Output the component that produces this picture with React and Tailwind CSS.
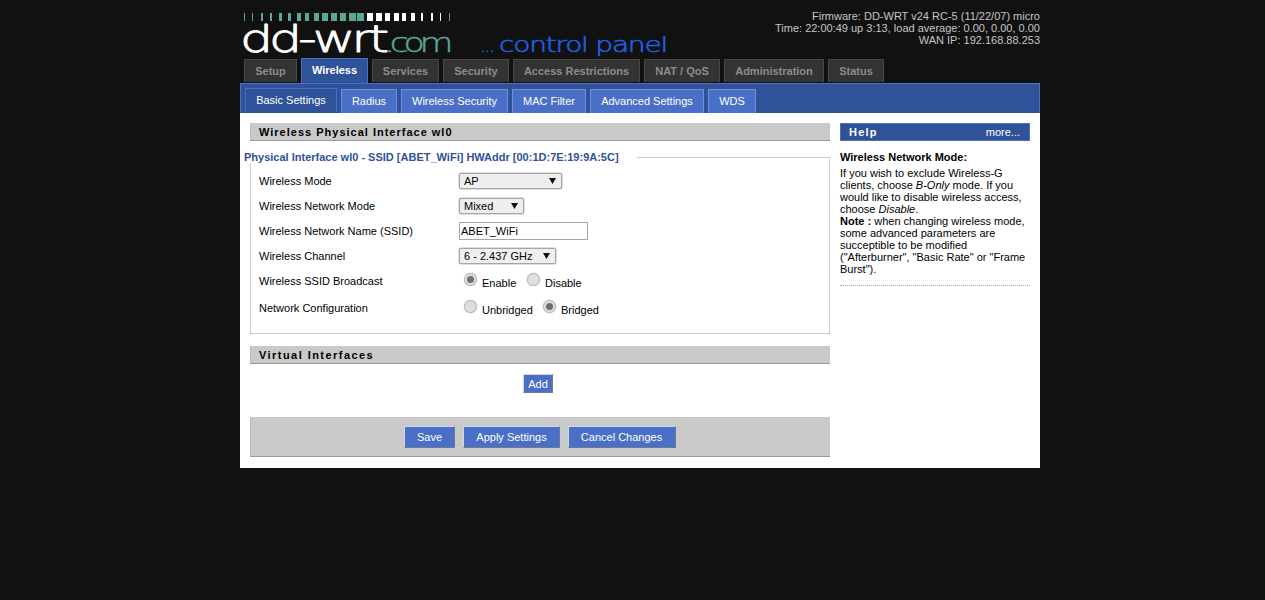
const mainTabs = [
  { name: "Setup", width: "w-[53px]" },
  { name: "Wireless", width: "w-[67px]", active: true },
  { name: "Services", width: "w-[67px]" },
  { name: "Security", width: "w-[66px]" },
  { name: "Access Restrictions", width: "w-[127px]" },
  { name: "NAT / QoS", width: "w-[76px]" },
  { name: "Administration", width: "w-[100px]" },
  { name: "Status", width: "w-[56px]" },
];

const subTabs = [
  { name: "Basic Settings", width: "w-[92px]", active: true },
  { name: "Radius", width: "w-[56px]" },
  { name: "Wireless Security", width: "w-[107px]" },
  { name: "MAC Filter", width: "w-[74px]" },
  { name: "Advanced Settings", width: "w-[114px]" },
  { name: "WDS", width: "w-[48px]" },
];

const stripes = [
  [244, 1, "#5aa897"], [252, 1, "#5aa897"], [261, 2, "#5aa897"], [270, 2, "#5aa897"],
  [279, 3, "#5aa897"], [288, 3, "#5aa897"], [297, 4, "#5aa897"], [305, 4, "#5aa897"],
  [314, 5, "#5aa897"], [322, 6, "#5aa897"], [331, 6, "#5aa897"], [340, 6, "#5aa897"],
  [349, 7, "#5aa897"], [357, 7, "#5aa897"], [367, 6, "#ffffff"], [376, 6, "#ffffff"],
  [385, 5, "#ffffff"], [394, 5, "#ffffff"], [402, 4, "#ffffff"], [411, 4, "#ffffff"],
  [421, 2, "#ffffff"], [431, 2, "#ffffff"], [440, 1, "#ffffff"], [449, 1, "#888888"],
];

const Logo = () => (
  <svg width="440" height="58" viewBox="240 0 440 58" className="block">
    {stripes.map(([x, w, fill]) => (
      <rect key={x} x={x} y="13" width={w} height="8" fill={fill} />
    ))}
    <g fontFamily="'DejaVu Sans', sans-serif" fontWeight="200" strokeLinejoin="round">
      <text x="240" y="52" fontSize="38" letterSpacing="-3" fill="#fff" stroke="#fff" strokeWidth="0.9" textLength="145" lengthAdjust="spacingAndGlyphs">dd-wrt</text>
      <text x="384" y="52" fontSize="26" letterSpacing="-4" fill="#5aa897" stroke="#5aa897" strokeWidth="0.4" textLength="64" lengthAdjust="spacingAndGlyphs">.com</text>
      <text x="480" y="52" fontSize="22" letterSpacing="-2" fill="#1f63e8" stroke="#1f63e8" strokeWidth="0.4" textLength="13" lengthAdjust="spacingAndGlyphs">...</text>
      <text x="499" y="52" fontSize="22" letterSpacing="-1" fill="#1f63e8" stroke="#1f63e8" strokeWidth="0.5" textLength="168" lengthAdjust="spacingAndGlyphs">control panel</text>
    </g>
  </svg>
);

const SectionBar = ({ children, tracking }) => (
  <h2 className={`h-[18px] border-l border-b border-l-[#bbbbbb] border-b-[#999999] bg-[#c9c9c9] pl-[8px] text-[11px] leading-[19px] font-bold text-[#000] ${tracking}`}>
    {children}
  </h2>
);

const Select = ({ value, width }) => (
  <div className={`relative h-[16px] ${width}`}>
    <select
      defaultValue={value}
      className="block h-full w-full appearance-none rounded-[2px] border border-[#a6a6a6] bg-[#efefef] pl-[4px] text-[11px] leading-[14px] text-[#000] shadow-[0_0_0_0.5px_#c0c0c0]"
    >
      <option>{value}</option>
    </select>
    <svg width="7" height="6" viewBox="0 0 7 6" className="pointer-events-none absolute top-[5px] right-[6px]">
      <path d="M0 0h7L3.5 6z" fill="#111" />
    </svg>
  </div>
);

const Radio = ({ checked }) => (
  <span className="flex h-[13px] w-[13px] items-center justify-center rounded-full border border-[#bdbdbd] bg-[#dedede] shadow-[0_0_1px_#999]">
    {checked && <span className="h-[7px] w-[7px] rounded-full bg-[#6e6e6e]" />}
  </span>
);

const RadioLabel = ({ checked, label, className }) => (
  <label className={`flex items-start ${className}`}>
    <Radio checked={checked} />
    <span className="mt-[4px] ml-[5px]">{label}</span>
  </label>
);

const Row = ({ label, height, children }) => (
  <div className={`flex items-center ${height}`}>
    <div className="w-[200px]">{label}</div>
    {children}
  </div>
);

const Button = ({ children, className }) => (
  <button className={`border border-t-[#cfd6e6] border-l-[#cfd6e6] border-r-[#6f7a90] border-b-[#6f7a90] bg-[#4a6fc7] text-[11px] text-white ${className}`}>
    {children}
  </button>
);

export default function App() {
  return (
    <div className="min-h-[600px] bg-[#111111] font-['Liberation_Sans',Arial,sans-serif] text-[11px] leading-[12px] text-[#000]">
      <div className="ml-[240px] w-[800px]">
        {/* Header */}
        <div className="relative h-[58px]">
          <Logo />
          <div className="absolute top-[10px] right-0 text-right text-[11px] leading-[12px] text-[#c2c6ca]">
            <div>Firmware: DD-WRT v24 RC-5 (11/22/07) micro</div>
            <div>Time: 22:00:49 up 3:13, load average: 0.00, 0.00, 0.00</div>
            <div>WAN IP: 192.168.88.253</div>
          </div>
        </div>

        {/* Main tabs */}
        <div className="flex h-[25px] items-end gap-[4px] pl-[4px]">
          {mainTabs.map((tab) =>
            tab.active ? (
              <div key={tab.name} className={`${tab.width} h-[25px] border border-b-0 border-[#4a6fc7] bg-[#2f5299] pt-[5px] text-center font-bold text-white`}>
                {tab.name}
              </div>
            ) : (
              <div key={tab.name} className={`${tab.width} mb-[1px] h-[23px] border border-b-0 border-[#484848] bg-[#333333] pt-[5px] text-center font-bold text-[#8c8c8c]`}>
                {tab.name}
              </div>
            )
          )}
        </div>

        {/* Sub tabs */}
        <div className="flex h-[30px] items-end gap-[4px] border-t border-x border-[#4a6fc7] bg-[#2f5299] pl-[4px]">
          {subTabs.map((tab) =>
            tab.active ? (
              <div key={tab.name} className={`${tab.width} mb-[1px] h-[24px] border border-b-0 border-[#4a6fc7] bg-[#2f5299] pt-[5px] text-center text-white`}>
                {tab.name}
              </div>
            ) : (
              <div key={tab.name} className={`${tab.width} h-[24px] border border-b-0 border-[#6f8fd8] bg-[#4a6fc7] pt-[5px] text-center text-white`}>
                {tab.name}
              </div>
            )
          )}
        </div>

        {/* Content */}
        <div className="flex h-[355px] gap-[10px] bg-white pt-[10px] pl-[10px]">
          <div className="w-[580px]">
            <SectionBar tracking="tracking-[1px]">Wireless Physical Interface wl0</SectionBar>
            <fieldset className="mt-[9px] h-[184px] border border-[#cccccc] pl-[8px]">
              <legend className="-ml-[15px] pr-[18px] text-[11px] leading-[14px] font-bold text-[#2f5299]">
                Physical Interface wl0 - SSID [ABET_WiFi] HWAddr [00:1D:7E:19:9A:5C]
              </legend>
              <div className="pt-[4px]">
                <Row label="Wireless Mode" height="h-[25px]">
                  <Select value="AP" width="w-[103px]" />
                </Row>
                <Row label="Wireless Network Mode" height="h-[25px]">
                  <Select value="Mixed" width="w-[65px]" />
                </Row>
                <Row label="Wireless Network Name (SSID)" height="h-[25px]">
                  <input
                    defaultValue="ABET_WiFi"
                    className="h-[18px] w-[129px] border border-[#a6a6a6] bg-white pl-[1px] text-[11px] text-[#000]"
                  />
                </Row>
                <Row label="Wireless Channel" height="h-[25px]">
                  <Select value="6 - 2.437 GHz" width="w-[97px]" />
                </Row>
                <Row label="Wireless SSID Broadcast" height="h-[25px]">
                  <div className="flex pl-[5px]">
                    <RadioLabel checked label="Enable" className="w-[63px]" />
                    <RadioLabel label="Disable" />
                  </div>
                </Row>
                <Row label="Network Configuration" height="mt-[2px] h-[25px]">
                  <div className="flex pl-[5px]">
                    <RadioLabel label="Unbridged" className="w-[79px]" />
                    <RadioLabel checked label="Bridged" />
                  </div>
                </Row>
              </div>
            </fieldset>

            <div className="mt-[12px]">
              <SectionBar tracking="tracking-[1.45px]">Virtual Interfaces</SectionBar>
            </div>
            <div className="mt-[10px] flex justify-center pr-[4px]">
              <Button className="h-[19px] w-[30px]">Add</Button>
            </div>

            <div className="mt-[24px] flex h-[40px] items-start justify-center gap-[8px] border-l border-b border-l-[#bbbbbb] border-b-[#999999] bg-[#c9c9c9] pt-[9px] pr-[2px]">
              <Button className="h-[22px] w-[51px] pl-[1px]">Save</Button>
              <Button className="h-[22px] w-[97px] pl-[1px]">Apply Settings</Button>
              <Button className="h-[22px] w-[108px]">Cancel Changes</Button>
            </div>
          </div>

          {/* Help */}
          <div className="w-[190px]">
            <div className="flex h-[18px] items-center justify-between border border-[#4a6fc7] bg-[#2f5299] pr-[9px] pl-[8px] text-white">
              <span className="font-bold tracking-[1.25px]">Help</span>
              <span>more...</span>
            </div>
            <div className="border-b border-dotted border-[#aaaaaa] pt-[10px] pb-[10px]">
              <div className="font-bold">Wireless Network Mode:</div>
              <p className="mt-[4px]">
                If you wish to exclude Wireless-G clients, choose <em>B-Only</em> mode. If you would like to disable wireless access, choose <em>Disable</em>.
                <br />
                <b>Note :</b> when changing wireless mode, some advanced parameters are succeptible to be modified ("Afterburner", "Basic Rate" or "Frame Burst").
              </p>
            </div>
          </div>
        </div>
      </div>
    </div>
  );
}
